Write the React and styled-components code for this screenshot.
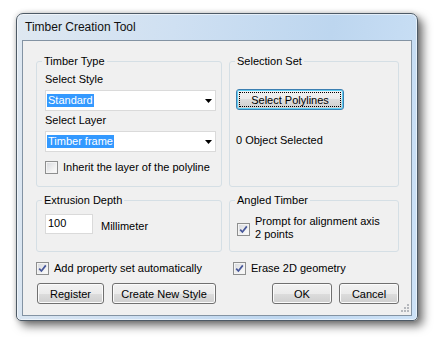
import styled, { createGlobalStyle } from "styled-components";

const GlobalStyle = createGlobalStyle`
  body {
    margin: 0;
    background: #fff;
    font-family: "Liberation Sans", Arial, sans-serif;
    font-size: 11px;
    color: #000;
  }
`;

// page holding the floating dialog
const Page = styled.div`
  width: 439px;
  height: 339px;
  box-sizing: border-box;
  padding: 13px 0 0 16px;
  overflow: hidden;
`;

// vista glass frame
const Window = styled.div`
  width: 402px;
  height: 308px;
  box-sizing: border-box;
  border: 1px solid #4d5a66;
  border-radius: 7px 7px 5px 5px;
  background: linear-gradient(100deg, #dfe8f1 0%, #cfe0f2 35%, #bdd6ef 70%, #cde2f7 100%);
  box-shadow: inset 0 0 0 1px rgba(255, 255, 255, 0.55), 5px 5px 10px rgba(0, 0, 0, 0.55),
    0 0 5px rgba(0, 0, 0, 0.2);
  padding: 0 5px 4px 5px;
  display: flex;
  flex-direction: column;
`;

const TitleBar = styled.div`
  height: 26px;
  display: flex;
  align-items: center;
  padding-left: 3px;
  font-size: 12px;
  color: #101010;
`;

// grey client area of the dialog
const Client = styled.div`
  flex: 1;
  position: relative;
  background: #f0f0f0;
  border: 1px solid #8393a3;
  display: grid;
  grid-template-columns: 186px 170px;
  column-gap: 7px;
  align-content: start;
  padding: 14px 0 0 13px;
`;

// group box
const Group = styled.fieldset`
  margin: ${(p) => p.$top || 0}px 0 0 0;
  min-width: 0;
  height: ${(p) => p.$h}px;
  box-sizing: border-box;
  border: 1px solid #d5dfe5;
  border-radius: 3px;
  padding: 5px 5px 0 ${(p) => p.$inset}px;
  display: flex;
  flex-direction: column;
  align-items: flex-start;

  & > legend {
    margin-left: ${(p) => 5 - p.$inset}px;
  }
`;

const Legend = styled.legend`
  padding: 0 2px;
  line-height: 13px;
`;

const Label = styled.div`
  line-height: 13px;
  margin-top: ${(p) => p.$top || 0}px;
  margin-left: ${(p) => p.$left || 0}px;
  white-space: nowrap;
`;

const Combo = styled.div`
  width: 171px;
  height: 21px;
  box-sizing: border-box;
  margin-top: ${(p) => p.$top || 0}px;
  background: #fff;
  border: 1px solid #dadada;
  display: flex;
  align-items: center;
  justify-content: space-between;
  padding: 0 3px 0 1px;
`;

const Selected = styled.span`
  background: #3399ff;
  color: #fff;
  line-height: 13px;
  padding: 0 1px;
`;

const TextBox = styled.div`
  width: 48px;
  height: 20px;
  box-sizing: border-box;
  background: #fff;
  border: 1px solid #dadada;
  padding: 2px 0 0 2px;
  line-height: 13px;
`;

const Row = styled.div`
  display: flex;
  align-items: ${(p) => p.$align || "center"};
  margin-top: ${(p) => p.$top || 0}px;
  margin-left: ${(p) => p.$left || 0}px;
  gap: ${(p) => p.$gap || 0}px;
  justify-content: ${(p) => p.$justify || "flex-start"};
`;

const Box = styled.span`
  width: 13px;
  height: 13px;
  box-sizing: border-box;
  flex: none;
  border: 1px solid #8e8f8f;
  background: linear-gradient(135deg, #d6d8dc 0%, #f4f4f4 70%, #fbfbfb 100%);
  box-shadow: inset 0 0 0 1px #f4f4f4;
  margin-top: ${(p) => p.$top || 0}px;
  margin-right: 5px;
  display: flex;
  align-items: center;
  justify-content: center;
`;

const CheckText = styled.span`
  line-height: 13px;
  white-space: nowrap;
`;

const Button = styled.div`
  width: ${(p) => p.$w}px;
  height: 21px;
  box-sizing: border-box;
  border: 1px solid ${(p) => (p.$focus ? "#3c7fb1" : "#707070")};
  border-radius: 3px;
  background: linear-gradient(180deg, #f2f2f2 0%, #ebebeb 50%, #dddddd 50%, #cfcfcf 100%);
  box-shadow: inset 0 0 0 1px ${(p) => (p.$focus ? "#5fd0f5" : "#fbfbfb")};
  margin-top: ${(p) => p.$top || 0}px;
  margin-left: ${(p) => p.$left || 0}px;
  display: flex;
  align-items: center;
  justify-content: center;
  padding: 2px;
`;

const FocusRect = styled.span`
  flex: 1;
  align-self: stretch;
  border: 1px dotted #000;
  display: flex;
  align-items: center;
  justify-content: center;
`;

const Grip = styled.svg`
  position: absolute;
  right: 2px;
  bottom: 2px;
`;

const Arrow = () => (
  <svg width="7" height="4" viewBox="0 0 7 4">
    <polygon points="0,0 7,0 3.5,4" fill="#000" />
  </svg>
);

const Check = ({ checked, top, children }) => (
  <>
    <Box $top={top}>
      {checked && (
        <svg width="9" height="9" viewBox="0 0 9 9">
          <path d="M1.2 4.6 L3.4 7 L7.8 1.4" stroke="#47579a" strokeWidth="1.7" fill="none" />
        </svg>
      )}
    </Box>
    <CheckText>{children}</CheckText>
  </>
);

const App = () => {
  return (
    <Page>
      <GlobalStyle />
      <Window>
        <TitleBar>Timber Creation Tool</TitleBar>
        <Client>
          <Group $h={132} $inset={8}>
            <Legend>Timber Type</Legend>
            <Label>Select Style</Label>
            <Combo $top={4}>
              <Selected>Standard</Selected>
              <Arrow />
            </Combo>
            <Label $top={3}>Select Layer</Label>
            <Combo $top={4}>
              <Selected>Timber frame</Selected>
              <Arrow />
            </Combo>
            <Row $top={9}>
              <Check>Inherit the layer of the polyline</Check>
            </Row>
          </Group>

          <Group $h={132} $inset={6}>
            <Legend>Selection Set</Legend>
            <Button $w={108} $top={16} $focus>
              <FocusRect>Select Polylines</FocusRect>
            </Button>
            <Label $top={24}>0 Object Selected</Label>
          </Group>

          <Group $h={58} $top={7} $inset={8}>
            <Legend>Extrusion Depth</Legend>
            <Row $top={2} $align="flex-start">
              <TextBox>100</TextBox>
              <Label $top={6} $left={8}>Millimeter</Label>
            </Row>
          </Group>

          <Group $h={58} $top={7} $inset={7}>
            <Legend>Angled Timber</Legend>
            <Row $top={3} $align="flex-start">
              <Check checked top={8}>
                Prompt for alignment axis
                <br />2 points
              </Check>
            </Row>
          </Group>

          <Row $top={10}>
            <Check checked>Add property set automatically</Check>
          </Row>
          <Row $top={10} $left={4}>
            <Check checked>Erase 2D geometry</Check>
          </Row>

          <Row $top={8} $gap={8}>
            <Button $w={67} $left={1}>Register</Button>
            <Button $w={104}>Create New Style</Button>
          </Row>
          <Row $top={8} $gap={7} $justify="flex-end">
            <Button $w={60}>OK</Button>
            <Button $w={60}>Cancel</Button>
          </Row>

          <Grip width="10" height="10" viewBox="0 0 10 10">
            {[
              [8, 0],
              [5, 3],
              [8, 3],
              [2, 6],
              [5, 6],
              [8, 6],
            ].map(([x, y]) => (
              <rect key={`${x}-${y}`} x={x} y={y + 1} width="2" height="2" fill="#b5b8bd" />
            ))}
          </Grip>
        </Client>
      </Window>
    </Page>
  );
};

export default App;
